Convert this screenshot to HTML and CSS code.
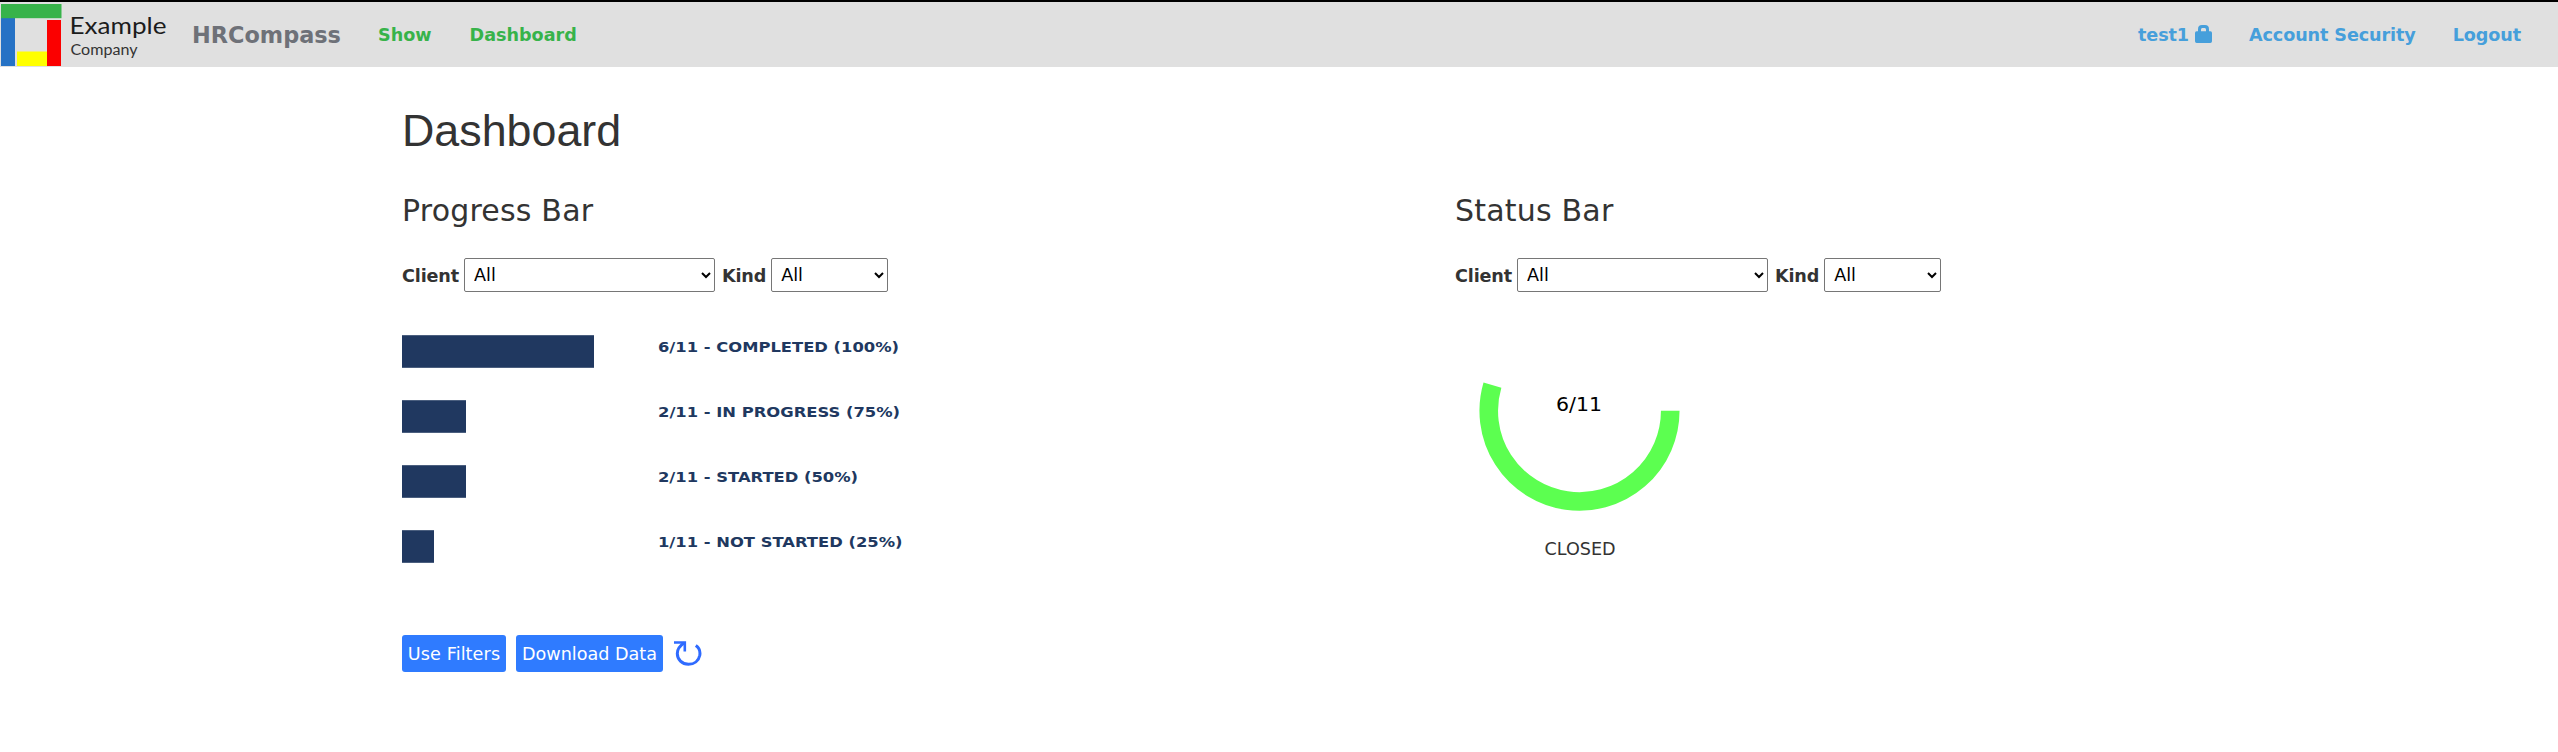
FILE: index.html
```html
<!DOCTYPE html>
<html lang="en">
<head>
<meta charset="utf-8">
<title>HRCompass</title>
<link rel="stylesheet" href="styles.css">
</head>
<body>
<header class="navbar">
  <svg class="logo" width="170" height="65" viewBox="0 2 170 65">
    <rect x="1" y="18" width="14" height="48" fill="#2672c5"/>
    <rect x="17" y="51.5" width="31" height="14.5" fill="#ffff00"/>
    <rect x="47" y="20" width="14" height="46" fill="#fb0000"/>
    <rect x="1" y="4" width="60.5" height="14.2" fill="#37b34a"/>
    <text class="logo-name" x="69.5" y="33.7" textLength="97" lengthAdjust="spacingAndGlyphs">Example</text>
    <text class="logo-sub" x="70.5" y="54.6" textLength="67" lengthAdjust="spacingAndGlyphs">Company</text>
  </svg>
  <a class="brand">HRCompass</a>
  <nav class="links links-main"><a>Show</a><a>Dashboard</a></nav>
  <nav class="links links-user">
    <a class="user">test1
      <svg width="17" height="18" viewBox="0 0 17 18"><path d="M1.500 6.300H3V4.200Q3 0 7 0h3q4 0 4 4.200V6.300h1.500Q17 6.300 17 8v8.300Q17 18 15.300 18H1.700Q0 18 0 16.300V8Q0 6.300 1.500 6.300ZM6 6.300h5V4.500Q11 3 9.800 3H7.200Q6 3 6 4.500Z" fill="#469fdb"/></svg></a>
    <a>Account Security</a><a>Logout</a>
  </nav>
</header>
<main class="page">
  <h1>Dashboard</h1>
  <div class="columns">
    <section>
      <h2>Progress Bar</h2>
      <form class="filters">
        <label>Client</label><select class="client"><option>All</option></select>
        <label>Kind</label><select class="kind"><option>All</option></select>
      </form>
      <svg class="bars" width="520" height="240" viewBox="0 0 520 240">
        <g fill="#203860">
          <rect x="0" y="5.200" width="192" height="32.600"/>
          <rect x="0" y="70.200" width="64" height="32.600"/>
          <rect x="0" y="135.200" width="64" height="32.600"/>
          <rect x="0" y="200.200" width="32" height="32.600"/>
        </g>
        <g class="bar-labels">
          <text x="256" y="21.800" textLength="241" lengthAdjust="spacingAndGlyphs">6/11 - COMPLETED (100%)</text>
          <text x="256" y="86.800" textLength="242" lengthAdjust="spacingAndGlyphs">2/11 - IN PROGRESS (75%)</text>
          <text x="256" y="151.800" textLength="200" lengthAdjust="spacingAndGlyphs">2/11 - STARTED (50%)</text>
          <text x="256" y="216.800" textLength="244.500" lengthAdjust="spacingAndGlyphs">1/11 - NOT STARTED (25%)</text>
        </g>
      </svg>
      <div class="actions">
        <button class="btn btn-filters">Use Filters</button>
        <button class="btn btn-download">Download Data</button>
        <svg class="refresh" width="28" height="26" viewBox="0 0 28 26"><path d="M21.800 4.600C25.200 7 26.500 10 25.800 14.200C24.700 19.900 20 23.300 14.500 23.300C8 23.300 3.300 18.500 3.300 12.500C3.300 8.500 5.500 5 10 2" fill="none" stroke="#2f6bff" stroke-width="3"/><path d="M0 1.500H10.800V10.500" fill="none" stroke="#2f6bff" stroke-width="2.600"/></svg>
      </div>
    </section>
    <section>
      <h2>Status Bar</h2>
      <form class="filters">
        <label>Client</label><select class="client"><option>All</option></select>
        <label>Kind</label><select class="kind"><option>All</option></select>
      </form>
      <figure class="gauge">
        <svg width="250" height="190" viewBox="0 0 250 190">
          <path d="M215.250 80.700A90.750 90.750 0 1 1 37.430 55.130" fill="none" stroke="#5cff50" stroke-width="18.600"/>
          <text class="gauge-value" x="124" y="81" text-anchor="middle" textLength="46" lengthAdjust="spacingAndGlyphs">6/11</text>
        </svg>
        <figcaption>CLOSED</figcaption>
      </figure>
    </section>
  </div>
</main>
</body>
</html>
```
FILE: styles.css
```css
* { box-sizing: border-box; }
body {
  margin: 0;
  background: #fff;
  color: #333;
  font: 17.6px/24px "DejaVu Sans", Verdana, sans-serif;
}
.navbar {
  display: flex;
  align-items: center;
  height: 67px;
  border-top: 2px solid #000;
  background: #e0e0e0;
  font-weight: bold;
}
.logo { display: block; flex: none; }
.logo-name { font: 400 23px Lato, sans-serif; fill: #1c1c1c; }
.logo-sub { font: 400 14.5px Lato, sans-serif; fill: #333; }
.brand { margin-left: 22px; width: 150px; font-size: 22.4px; color: #6e7178; }
.links { display: flex; white-space: nowrap; }
.links-main { margin-left: 36px; gap: 38px; color: #37b34a; }
.links-user { margin-left: auto; margin-right: 37px; gap: 37px; color: #469fdb; letter-spacing: -0.1px; }
.user { display: flex; gap: 6px; }
.user svg { margin-top: 2px; }
.page { padding: 36px 0 0 402px; }
h1 {
  margin: 0;
  font: 400 44.8px/54px "Liberation Sans", Arial, sans-serif;
}
.columns { display: grid; grid-template-columns: 1053px 1053px; padding-top: 34px; }
h2 { margin: 0; font-size: 30px; line-height: 40px; font-weight: 400; letter-spacing: 0.2px; white-space: nowrap; }
.filters { display: flex; align-items: center; height: 34px; margin-top: 27px; }
label { padding-top: 1px; font-weight: bold; letter-spacing: -0.15px; }
select {
  height: 34px;
  padding: 0 4px 0 5px;
  border: 1px solid #767676;
  border-radius: 2px;
  background-color: #fff;
  color: #000;
  font: 17.6px "DejaVu Sans", Verdana, sans-serif;
}
.client { width: 251px; margin: 0 7px 0 5px; }
.kind { width: 117px; margin-left: 5px; }
.bars { display: block; margin-top: 38px; }
.bar-labels { font: bold 13.6px "DejaVu Sans", Verdana, sans-serif; fill: #203860; }
.actions { display: flex; align-items: center; margin-top: 65px; }
.btn {
  height: 37px;
  margin: 0 10px 0 0;
  padding: 0;
  border: 0;
  border-radius: 3px;
  background: #2f7bff;
  color: #fff;
  font: 17.6px "DejaVu Sans", Verdana, sans-serif;
}
.btn-filters { width: 104px; letter-spacing: 0.1px; }
.btn-download { width: 147px; }
.refresh { margin-left: 1px; }
.gauge { width: 250px; margin: 38px 0 0; }
.gauge svg { display: block; }
.gauge-value { font: 20px "DejaVu Sans", Verdana, sans-serif; fill: #000; }
figcaption { margin-top: 17px; text-align: center; }
```
